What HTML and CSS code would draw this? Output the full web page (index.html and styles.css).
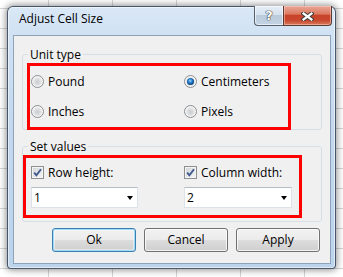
FILE: index.html
```html
<!DOCTYPE html>
<html>
<head>
<meta charset="utf-8">
<title>Adjust Cell Size</title>
<link rel="stylesheet" href="styles.css">
</head>
<body>
<div class="window">
  <div class="titlebar">
    <span class="title">Adjust Cell Size</span>
    <div class="caption-btns">
      <span class="cbtn help">?</span>
      <span class="cbtn close">
        <svg width="13" height="9" viewBox="0 0 13 9">
          <path d="M2.5 1.5 L10.5 7.5 M10.5 1.5 L2.5 7.5" stroke="#3b3b3b" stroke-width="4.2" stroke-linecap="square" fill="none"/>
          <path d="M2.5 1.5 L10.5 7.5 M10.5 1.5 L2.5 7.5" stroke="#ffffff" stroke-width="2.2" stroke-linecap="square" fill="none"/>
        </svg>
      </span>
    </div>
  </div>
  <div class="client">
    <div class="group g1">
      <span class="legend">Unit type</span>
      <div class="mark m1">
        <label class="opt"><span class="radio"></span>Pound</label>
        <label class="opt"><span class="radio on"></span>Centimeters</label>
        <label class="opt"><span class="radio"></span>Inches</label>
        <label class="opt"><span class="radio"></span>Pixels</label>
      </div>
    </div>
    <div class="group g2">
      <span class="legend">Set values</span>
      <div class="mark m2">
        <div class="field">
          <label class="chk-row"><span class="chk"><svg width="11" height="11" viewBox="0 0 11 11"><path d="M2.2 5.6 L4.4 8.3 L9 2.2" stroke="#40598f" stroke-width="1.9" fill="none"/></svg></span>Row height:</label>
          <div class="combo"><span class="val">1</span><span class="arrow"></span></div>
        </div>
        <div class="field">
          <label class="chk-row"><span class="chk"><svg width="11" height="11" viewBox="0 0 11 11"><path d="M2.2 5.6 L4.4 8.3 L9 2.2" stroke="#40598f" stroke-width="1.9" fill="none"/></svg></span>Column width:</label>
          <div class="combo wide"><span class="val">2</span><span class="arrow"></span></div>
        </div>
      </div>
    </div>
    <div class="buttons">
      <button class="btn default">Ok</button>
      <button class="btn">Cancel</button>
      <button class="btn">Apply</button>
    </div>
  </div>
</div>
</body>
</html>
```
FILE: styles.css
```css
html, body {
  margin: 0;
  padding: 0;
}
body {
  width: 343px;
  height: 277px;
  overflow: hidden;
  background-color: #ffffff;
  background-image:
    linear-gradient(90deg, #d6d6d6 1px, transparent 1px),
    linear-gradient(#d6d6d6 1px, transparent 1px);
  background-size: 64px 20px;
  background-position: 48px 8px;
  font-family: "Open Sans", "Noto Sans", sans-serif;
  font-size: 12px;
  color: #000;
}
.window {
  box-sizing: border-box;
  width: 329px;
  height: 263px;
  margin: 6px 0 0 7px;
  border: 1px solid rgba(40, 52, 72, 0.8);
  border-radius: 6px 6px 4px 4px;
  background: linear-gradient(#dae8f6 0, #cfe1f3 30px, #c3d8ee 120px, #bcd3ec 100%);
  box-shadow: 0 0 7px 1px rgba(0, 0, 0, 0.45), inset 0 0 0 1px rgba(255, 255, 255, 0.55);
  padding: 0 4px 5px 5px;
}
.titlebar {
  height: 27px;
  display: flex;
  justify-content: space-between;
  align-items: flex-start;
}
.title {
  padding: 4px 0 0 6px;
  line-height: 16px;
  font-size: 12px;
}
.caption-btns {
  display: flex;
  margin-top: -1px;
  margin-right: -1px;
}
.cbtn {
  box-sizing: border-box;
  height: 20px;
  display: flex;
  align-items: center;
  justify-content: center;
  border: 1px solid #56606f;
  border-top: none;
}
.help {
  width: 29px;
  border-right: none;
  border-radius: 0 0 0 4px;
  background: linear-gradient(#e6eef7 0, #d6e2ef 45%, #bccbdc 50%, #c4d3e4 100%);
  box-shadow: inset 0 0 0 1px rgba(255, 255, 255, 0.6);
  color: #ffffff;
  font-family: "DejaVu Sans", sans-serif;
  font-weight: bold;
  font-size: 13px;
  line-height: 20px;
  text-shadow: 0 0 1px #333, 0 0 1px #333, 0 0 1px #333;
}
.close {
  width: 49px;
  border-color: #5a3a35;
  border-radius: 0 0 4px 0;
  background: linear-gradient(#eaa796 0, #dc7a62 42%, #c8432a 50%, #c8482e 75%, #d87a5c 100%);
  box-shadow: inset 0 0 0 1px rgba(255, 210, 200, 0.5);
}
.close svg {
  display: block;
  margin-top: 1px;
}
.client {
  box-sizing: border-box;
  width: 318px;
  height: 229px;
  margin-top: 1px;
  border: 1px solid #8ea3ba;
  background: #f0f0f0;
  padding: 0 9px 0 8px;
  overflow: hidden;
}
.group {
  width: 300px;
  box-sizing: border-box;
  border: 1px solid #d5dfe5;
  border-radius: 3px;
}
.g1 {
  margin-top: 18px;
  padding-bottom: 0;
}
.g2 {
  margin-top: 16px;
  padding-bottom: 3px;
}
.legend {
  display: block;
  width: max-content;
  margin: -8px 0 0 5px;
  padding: 0 2px;
  height: 15px;
  line-height: 15px;
  background: #f0f0f0;
}
.mark {
  box-sizing: border-box;
  border: 3px solid #ff0000;
  margin-top: 1px;
}
.m1 {
  width: 264px;
  height: 67px;
  margin-left: 4px;
  margin-bottom: -1px;
  padding-left: 1px;
  display: grid;
  grid-template-columns: 153px 1fr;
  grid-template-rows: 30px 30px;
}
.opt {
  display: flex;
  align-items: center;
  line-height: 15px;
}
.radio {
  position: relative;
  box-sizing: border-box;
  width: 13px;
  height: 13px;
  margin-right: 4px;
  border-radius: 50%;
  border: 1px solid #8b8e91;
  background: radial-gradient(circle at 50% 55%, #c9ccd0 0, #dcdee0 3px, #eeeeee 5px, #fbfbfb 6px);
  box-shadow: inset 0 0 0 1px #f6f6f6;
  flex: none;
}
.radio.on::after {
  content: "";
  position: absolute;
  left: 2px;
  top: 2px;
  width: 7px;
  height: 7px;
  border-radius: 50%;
  background: radial-gradient(circle at 45% 40%, #a8dcff 0, #3b92d6 1.5px, #145ea6 3px, #0b3f78 4px);
}
.m2 {
  width: 279px;
  height: 63px;
  margin-left: 0;
  padding: 8px 0 0 5px;
  display: grid;
  grid-template-columns: 153px 1fr;
}
.field {
  display: flex;
  flex-direction: column;
  align-items: flex-start;
}
.chk-row {
  display: flex;
  align-items: center;
  height: 13px;
  line-height: 15px;
}
.chk {
  box-sizing: border-box;
  width: 13px;
  height: 13px;
  margin-right: 4px;
  border: 1px solid #8e8f8f;
  background: linear-gradient(135deg, #d2d5d8 0, #e6e8ea 60%, #f6f6f6 100%);
  box-shadow: inset 0 0 0 1px #f4f4f4;
  display: flex;
  align-items: center;
  justify-content: center;
  flex: none;
}
.chk svg {
  display: block;
}
.combo {
  box-sizing: border-box;
  width: 107px;
  height: 21px;
  margin-top: 8px;
  background: #ffffff;
  border: 1px solid #dde2e8;
  border-top-color: #b4bcc6;
  display: flex;
  align-items: center;
  justify-content: space-between;
  padding: 0 4px 0 2px;
}
.combo.wide {
  width: 108px;
}
.val {
  line-height: 15px;
}
.arrow {
  width: 0;
  height: 0;
  border-left: 3.5px solid transparent;
  border-right: 3.5px solid transparent;
  border-top: 4px solid #000;
  margin-top: 1px;
}
.buttons {
  display: flex;
  justify-content: flex-end;
  gap: 8px;
  margin-top: 6px;
  padding-right: 1px;
}
.btn {
  box-sizing: border-box;
  width: 84px;
  height: 24px;
  margin: 0;
  padding: 0;
  border: 1px solid #707070;
  border-radius: 3px;
  background: linear-gradient(#f2f2f2 0, #ebebeb 50%, #dddddd 50%, #cfcfcf 100%);
  box-shadow: inset 0 0 0 1px rgba(255, 255, 255, 0.75);
  font-family: "Open Sans", "Noto Sans", sans-serif;
  font-size: 12px;
  color: #000;
  line-height: 16px;
}
.btn.default {
  border-color: #3c7fb1;
  box-shadow: inset 0 0 0 1px #9fdcf7, inset 0 0 0 2px rgba(255, 255, 255, 0.35);
}
```
